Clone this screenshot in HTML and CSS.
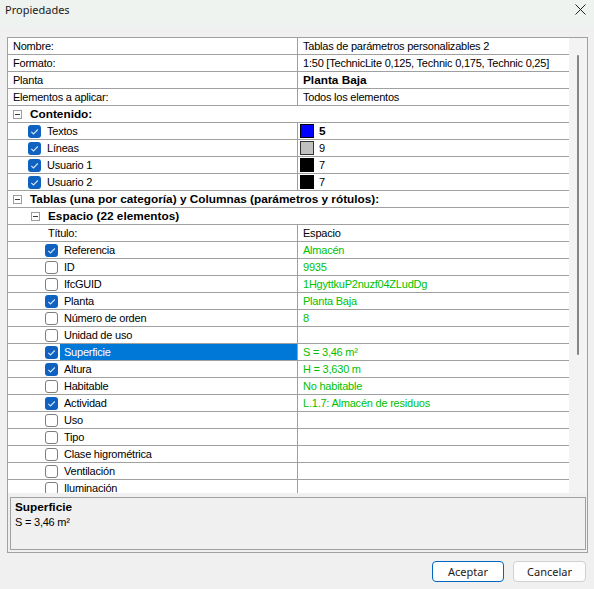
FILE: index.html
```html
<!DOCTYPE html>
<html lang="es">
<head>
<meta charset="utf-8">
<title>Propiedades</title>
<link rel="stylesheet" href="styles.css">
</head>
<body>
<svg class="defs" width="0" height="0" aria-hidden="true">
  <symbol id="cb-on" viewBox="0 0 13 13"><rect x="0" y="0" width="13" height="13" rx="3" fill="#0f62c0"/><path d="M3.3 6.8 L5.5 9 L9.8 4.5" fill="none" stroke="#d6e5f7" stroke-width="1.1"/></symbol>
  <symbol id="cb-off" viewBox="0 0 13 13"><rect x="0.5" y="0.5" width="12" height="12" rx="2.5" fill="#fff" stroke="#7d7d7d"/></symbol>
  <symbol id="minus" viewBox="0 0 9 9"><rect x="0.5" y="0.5" width="8" height="8" fill="#fff" stroke="#9c9c9c"/><path d="M2 4.5 H7" stroke="#3a3a3a"/></symbol>
</svg>
<div class="titlebar">
  <span class="title">Propiedades</span>
  <svg class="close" width="11" height="11" viewBox="0 0 11 11"><path d="M0.5 0.5 L10.5 10.5 M10.5 0.5 L0.5 10.5" stroke="#222" stroke-width="1"/></svg>
</div>
<div class="body">
  <div class="frame">
    <div class="grid">
      <div class="rows">
        <div class="row"><div class="key">Nombre:</div><div class="val">Tablas de parámetros personalizables 2</div></div>
        <div class="row"><div class="key">Formato:</div><div class="val">1:50 [TechnicLite 0,125, Technic 0,175, Technic 0,25]</div></div>
        <div class="row"><div class="key">Planta</div><div class="val"><b>Planta Baja</b></div></div>
        <div class="row"><div class="key">Elementos a aplicar:</div><div class="val">Todos los elementos</div></div>
        <div class="row cat"><svg class="exp"><use href="#minus"/></svg><b>Contenido:</b></div>
        <div class="row"><div class="key l1"><svg class="cb"><use href="#cb-on"/></svg><span class="lbl">Textos</span></div><div class="val sv"><span class="sw blue"></span><b>5</b></div></div>
        <div class="row"><div class="key l1"><svg class="cb"><use href="#cb-on"/></svg><span class="lbl">Líneas</span></div><div class="val sv"><span class="sw gray"></span>9</div></div>
        <div class="row"><div class="key l1"><svg class="cb"><use href="#cb-on"/></svg><span class="lbl">Usuario 1</span></div><div class="val sv"><span class="sw black"></span>7</div></div>
        <div class="row"><div class="key l1"><svg class="cb"><use href="#cb-on"/></svg><span class="lbl">Usuario 2</span></div><div class="val sv"><span class="sw black"></span>7</div></div>
        <div class="row cat"><svg class="exp"><use href="#minus"/></svg><b>Tablas (una por categoría) y Columnas (parámetros y rótulos):</b></div>
        <div class="row cat sub"><svg class="exp"><use href="#minus"/></svg><b>Espacio (22 elementos)</b></div>
        <div class="row"><div class="key head">Título:</div><div class="val">Espacio</div></div>
        <div class="row"><div class="key l2"><svg class="cb"><use href="#cb-on"/></svg><span class="lbl">Referencia</span></div><div class="val g">Almacén</div></div>
        <div class="row"><div class="key l2"><svg class="cb"><use href="#cb-off"/></svg><span class="lbl">ID</span></div><div class="val g">9935</div></div>
        <div class="row"><div class="key l2"><svg class="cb"><use href="#cb-off"/></svg><span class="lbl">IfcGUID</span></div><div class="val g">1HgyttkuP2nuzf04ZLudDg</div></div>
        <div class="row"><div class="key l2"><svg class="cb"><use href="#cb-on"/></svg><span class="lbl">Planta</span></div><div class="val g">Planta Baja</div></div>
        <div class="row"><div class="key l2"><svg class="cb"><use href="#cb-off"/></svg><span class="lbl">Número de orden</span></div><div class="val g">8</div></div>
        <div class="row"><div class="key l2"><svg class="cb"><use href="#cb-off"/></svg><span class="lbl">Unidad de uso</span></div><div class="val g"></div></div>
        <div class="row"><div class="key l2"><svg class="cb"><use href="#cb-on"/></svg><span class="lbl sel">Superficie</span></div><div class="val g">S = 3,46 m²</div></div>
        <div class="row"><div class="key l2"><svg class="cb"><use href="#cb-on"/></svg><span class="lbl">Altura</span></div><div class="val g">H = 3,630 m</div></div>
        <div class="row"><div class="key l2"><svg class="cb"><use href="#cb-off"/></svg><span class="lbl">Habitable</span></div><div class="val g">No habitable</div></div>
        <div class="row"><div class="key l2"><svg class="cb"><use href="#cb-on"/></svg><span class="lbl">Actividad</span></div><div class="val g">L.1.7: Almacén de residuos</div></div>
        <div class="row"><div class="key l2"><svg class="cb"><use href="#cb-off"/></svg><span class="lbl">Uso</span></div><div class="val g"></div></div>
        <div class="row"><div class="key l2"><svg class="cb"><use href="#cb-off"/></svg><span class="lbl">Tipo</span></div><div class="val g"></div></div>
        <div class="row"><div class="key l2"><svg class="cb"><use href="#cb-off"/></svg><span class="lbl">Clase higrométrica</span></div><div class="val g"></div></div>
        <div class="row"><div class="key l2"><svg class="cb"><use href="#cb-off"/></svg><span class="lbl">Ventilación</span></div><div class="val g"></div></div>
        <div class="row"><div class="key l2"><svg class="cb"><use href="#cb-off"/></svg><span class="lbl">Iluminación</span></div><div class="val g"></div></div>
      </div>
      <div class="scrollbar"><div class="thumb"></div></div>
    </div>
    <div class="desc">
      <div class="desc-title">Superficie</div>
      <div>S = 3,46 m²</div>
    </div>
  </div>
  <div class="buttons">
    <button class="btn default">Aceptar</button>
    <button class="btn cancel">Cancelar</button>
  </div>
</div>
</body>
</html>
```
FILE: styles.css
```css
html, body {
  margin: 0;
  padding: 0;
}
body {
  width: 594px;
  height: 589px;
  overflow: hidden;
  background: #f0f0f0;
  color: #000;
  font-family: "Liberation Sans", Arial, sans-serif;
  font-size: 11px;
  letter-spacing: -0.22px;
}
.defs {
  position: absolute;
  width: 0;
  height: 0;
  overflow: hidden;
}
.titlebar {
  height: 27px;
  box-sizing: border-box;
  background: #eef3ef;
  display: flex;
  justify-content: space-between;
  align-items: flex-start;
  padding: 2px 8px 0 5px;
}
.title {
  font-family: "Noto Sans", sans-serif;
  font-size: 11px;
  letter-spacing: 0;
  line-height: 16px;
  color: #1a1a1a;
}
.close {
  margin-top: 2px;
}
.body {
  padding: 10px 0 0 7px;
}
.frame {
  width: 581px;
  box-sizing: border-box;
  border: 1px solid #a0a0a0;
}
.grid {
  display: flex;
  height: 455px;
  background: #fff;
}
.rows {
  width: 561px;
  overflow: hidden;
}
.scrollbar {
  width: 18px;
  background: #f3f3f3;
  padding-top: 17px;
  box-sizing: border-box;
}
.thumb {
  width: 2px;
  height: 300px;
  margin-left: 8px;
  background: #858585;
  border-radius: 1px;
}
.row {
  display: flex;
  height: 17px;
  box-sizing: border-box;
  border-bottom: 1px solid #a0a0a0;
  line-height: 16px;
  white-space: nowrap;
}
.key {
  width: 290px;
  flex: none;
  box-sizing: border-box;
  border-right: 1px solid #a0a0a0;
  padding-left: 5px;
  display: flex;
  align-items: center;
}
.key.l1 { padding-left: 20px; }
.key.l2 { padding-left: 37px; }
.key.head { padding-left: 40px; }
.val {
  flex: 1;
  padding-left: 5px;
  display: flex;
  align-items: center;
}
.val.g { color: #00bf00; }
.val.sv { padding-left: 2px; }
b {
  font-weight: bold;
  font-size: 11.8px;
  letter-spacing: 0;
}
.cat {
  align-items: center;
  padding-left: 5px;
}
.cat.sub { padding-left: 23px; }
.exp {
  width: 9px;
  height: 9px;
  margin-right: 8px;
  flex: none;
}
.cb {
  width: 13px;
  height: 13px;
  flex: none;
}
.lbl {
  flex: 1;
  margin-left: 2px;
  padding-left: 4px;
  height: 16px;
}
.lbl.sel {
  background: #0078d7;
  color: #fff;
}
.sw {
  width: 14px;
  height: 14px;
  box-sizing: border-box;
  border: 1px solid #000;
  margin-right: 5px;
  flex: none;
}
.sw.blue { background: #0000ff; }
.sw.gray { background: #c0c0c0; border-color: #333; }
.sw.black { background: #000; }
.desc {
  margin: 4px 1px 2px 2px;
  height: 53px;
  box-sizing: border-box;
  border: 1px solid #a0a0a0;
  padding: 2px 4px;
  line-height: 15px;
}
.desc-title {
  font-weight: bold;
  font-size: 11.8px;
  letter-spacing: 0;
}
.buttons {
  width: 581px;
  box-sizing: border-box;
  display: flex;
  justify-content: flex-end;
  gap: 9px;
  padding-right: 2px;
  margin-top: 8px;
}
.btn {
  width: 72px;
  height: 21px;
  padding: 0;
  box-sizing: border-box;
  font-family: "Noto Sans", sans-serif;
  font-size: 11px;
  letter-spacing: 0;
  color: #1a1a1a;
  background: #fdfdfd;
  border: 1px solid #d0d0d0;
  border-radius: 4px;
}
.btn.default {
  background: #fff;
  border-color: #0067c0;
}
.btn.cancel { width: 73px; }
```
